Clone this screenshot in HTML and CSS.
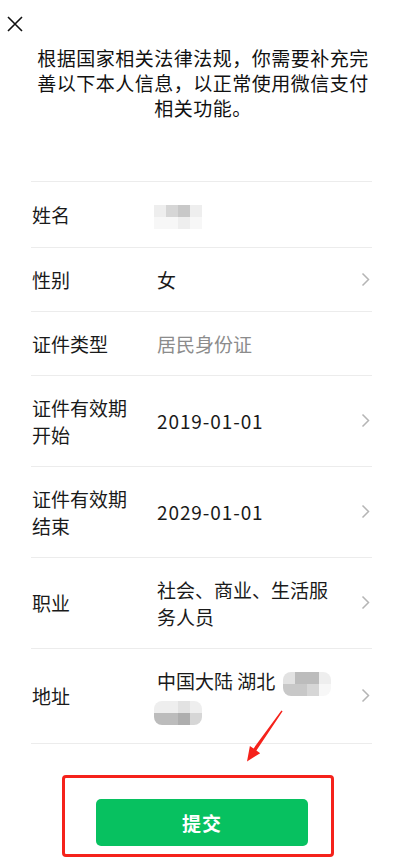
FILE: index.html
```html
<!DOCTYPE html>
<html lang="zh-CN">
  <head>
    <meta charset="UTF-8" />
    <meta name="viewport" content="width=device-width, initial-scale=1.0" />
    <title>补充个人信息</title>
    <link rel="stylesheet" href="styles.css">
  </head>
  <body>
    <div class="page">
      <header class="top">
        <button class="close" aria-label="关闭">
          <svg width="16" height="16" viewBox="0 0 16 16">
            <path d="M1 1 L15 15 M15 1 L1 15" stroke="#111" stroke-width="1.6" fill="none" />
          </svg>
        </button>
      </header>

      <p class="notice">根据国家相关法律法规，你需要补充完善以下本人信息，以正常使用微信支付相关功能。</p>

      <!-- 信息列表 -->
      <ul class="form">
        <li class="row">
          <span class="label">姓名</span>
          <span class="value">
            <span class="mosaic">
              <i class="g2"></i><i class="g4"></i><i class="g5"></i><i class="g2"></i>
              <i class="g1"></i><i class="g1"></i><i class="g2"></i><i class="g1"></i>
            </span>
          </span>
        </li>
        <li class="row">
          <span class="label">性别</span>
          <span class="value">女</span>
          <svg class="chevron" width="9" height="15" viewBox="0 0 9 15">
            <path d="M1.5 1.5 L7.5 7.5 L1.5 13.5" />
          </svg>
        </li>
        <li class="row">
          <span class="label">证件类型</span>
          <span class="value muted">居民身份证</span>
        </li>
        <li class="row">
          <span class="label">证件有效期开始</span>
          <span class="value date">2019-01-01</span>
          <svg class="chevron" width="9" height="15" viewBox="0 0 9 15">
            <path d="M1.5 1.5 L7.5 7.5 L1.5 13.5" />
          </svg>
        </li>
        <li class="row">
          <span class="label">证件有效期结束</span>
          <span class="value date">2029-01-01</span>
          <svg class="chevron" width="9" height="15" viewBox="0 0 9 15">
            <path d="M1.5 1.5 L7.5 7.5 L1.5 13.5" />
          </svg>
        </li>
        <li class="row">
          <span class="label">职业</span>
          <span class="value">社会、商业、生活服务人员</span>
          <svg class="chevron" width="9" height="15" viewBox="0 0 9 15">
            <path d="M1.5 1.5 L7.5 7.5 L1.5 13.5" />
          </svg>
        </li>
        <li class="row">
          <span class="label">地址</span>
          <span class="value">中国大陆 湖北<span class="mosaic round after">
              <i class="g3"></i><i class="g6"></i><i class="g6"></i><i class="g2"></i>
              <i class="g5"></i><i class="g5"></i><i class="g4"></i><i class="g1"></i>
            </span><br /><span class="mosaic round">
              <i class="g2"></i><i class="g2"></i><i class="g3"></i><i class="g2"></i>
              <i class="g6"></i><i class="g6"></i><i class="g7"></i><i class="g4"></i>
            </span>
          </span>
          <svg class="chevron" width="9" height="15" viewBox="0 0 9 15">
            <path d="M1.5 1.5 L7.5 7.5 L1.5 13.5" />
          </svg>
        </li>
      </ul>

      <div class="submit-box">
        <button class="submit">提交</button>
      </div>

      <!-- 标注箭头 -->
      <svg class="arrow" width="398" height="862" viewBox="0 0 398 862">
        <polygon points="282.6,711.3 256.4,750.4 260.2,753.2 247,761.5 249.9,745.9 253.6,748.4 281.4,710.5" fill="#f5221b" />
      </svg>
    </div>
  </body>
</html>
```

FILE: styles.css
```css
* {
  box-sizing: border-box;
  margin: 0;
  padding: 0;
}

html,
body {
  height: 100%;
  overflow: hidden;
}

body {
  font-family: "Noto Sans CJK SC", "Noto Sans", sans-serif;
  background-color: #fff;
  color: #1a1a1a;
}

.page {
  position: relative;
  width: 398px;
  height: 862px;
}

.top {
  height: 45px;
  padding: 16px 0 0 7px;
}

.close {
  display: block;
  width: 16px;
  height: 16px;
  border: none;
  background: none;
  cursor: pointer;
}

.close svg {
  display: block;
}

.notice {
  padding: 0 26px 0 34px;
  font-size: 19px;
  line-height: 25px;
  letter-spacing: 0.5px;
  text-align: center;
  color: #111;
}

.form {
  list-style: none;
  margin: 61px 26px 0 31px;
  border-bottom: 1px solid #ececec;
}

.row {
  display: flex;
  align-items: center;
  padding: 18px 2px 18px 1px;
  border-top: 1px solid #ececec;
  font-size: 19px;
  line-height: 27px;
}

.label {
  width: 100px;
  margin-right: 25px;
  flex-shrink: 0;
}

.value {
  flex: 1;
  margin-right: 20px;
}

.value.muted {
  color: #8c8c8c;
}

.value.date {
  letter-spacing: 0.9px;
}

.chevron {
  flex-shrink: 0;
  fill: none;
  stroke: #b5b5b5;
  stroke-width: 1.5;
}

.mosaic {
  display: inline-grid;
  grid-template-columns: repeat(4, 12px);
  grid-template-rows: repeat(2, 12px);
  vertical-align: middle;
  margin-left: -3px;
  filter: blur(0.6px);
}

.mosaic.after {
  margin-left: 8px;
}

.mosaic.round {
  border-radius: 8px;
  overflow: hidden;
}

.mosaic i {
  display: block;
}

.g1 { background-color: #f7f7f7; }
.g2 { background-color: #eeeeee; }
.g3 { background-color: #e2e2e2; }
.g4 { background-color: #d6d6d6; }
.g5 { background-color: #c8c8c8; }
.g6 { background-color: #bcbcbc; }
.g7 { background-color: #aeaeae; }

.submit-box {
  width: 272px;
  height: 82px;
  margin: 31px 0 0 62px;
  padding: 21px 0 0 31px;
  border: 3px solid #f5221b;
  border-radius: 4px;
}

.submit {
  display: block;
  width: 212px;
  height: 47px;
  border: none;
  border-radius: 5px;
  background-color: #07c160;
  color: #fff;
  font-family: "Noto Sans CJK SC", sans-serif;
  font-size: 19px;
  font-weight: bold;
  letter-spacing: 1px;
  cursor: pointer;
}

.arrow {
  position: absolute;
  top: 0;
  left: 0;
  pointer-events: none;
}
```
